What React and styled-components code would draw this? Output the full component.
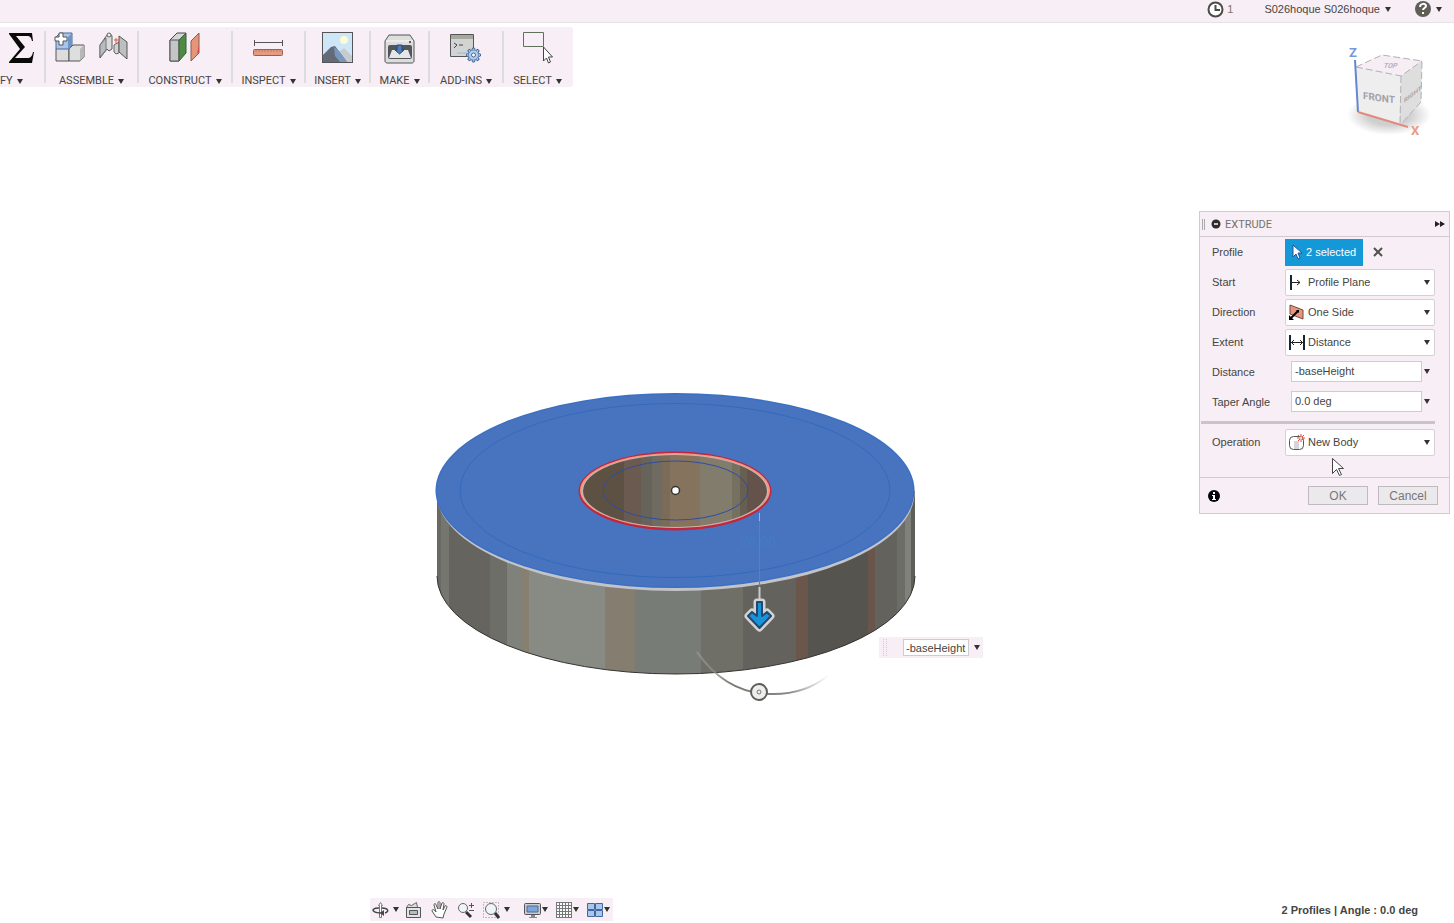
import React from "react";
import styled, { createGlobalStyle } from "styled-components";

const GlobalStyle = createGlobalStyle`
  * { box-sizing: border-box; }
  html, body { margin: 0; background: #fff; }
  body, button, input, select { font-family: "Liberation Sans", Arial, sans-serif; font-size: 11px; color: #45453f; }
  button { border: 0; background: none; padding: 0; cursor: pointer; }
  svg { display: block; flex: none; }
`;

const tint = "#f8eef6";
const line = "#cfcbcf";

const Page = styled.div`
  min-height: 100vh;
  display: flex;
  flex-direction: column;
  overflow: hidden;
`;

const Header = styled.header`
  height: 23px;
  display: flex;
  justify-content: flex-end;
  align-items: flex-start;
  padding: 0 12px 0 0;
  background: ${tint};
  border-bottom: 1px solid #e6e2e6;
`;

const HeaderButton = styled.button`
  height: 18px;
  display: flex;
  align-items: center;
  gap: ${(p) => p.$gap || 5}px;
  margin-left: ${(p) => p.$before || 0}px;
  color: ${(p) => p.$color || "#45453f"};
`;

const Workspace = styled.div`
  flex: 1;
  display: grid;
`;

const Canvas = styled.div`
  grid-area: 1 / 1;
  position: relative;
`;

const Model = styled.svg`
  position: absolute;
  left: 430px;
  top: 362px;
`;

const FloatingField = styled.div`
  position: absolute;
  left: 879px;
  top: 614px;
  height: 21px;
  display: flex;
  align-items: center;
  gap: 5px;
  padding: 0 3px 0 4px;
  background: ${tint};
`;

const Grip = styled.span`
  width: 4px;
  height: 17px;
  margin-right: 11px;
  border-left: 1px dotted ${line};
  border-right: 1px dotted ${line};
`;

const FloatingInput = styled.input`
  width: 66px;
  height: 17px;
  padding: 0 2px;
  border: 1px solid ${line};
  background: #fff;
`;

const Chrome = styled.div`
  grid-area: 1 / 1;
  position: relative;
  display: flex;
  flex-direction: column;
  pointer-events: none;
  & > * { pointer-events: auto; }
`;

const TopRow = styled.div`
  display: flex;
  justify-content: space-between;
  align-items: flex-start;
  padding: 4px 20px 0 0;
  height: 188px;
`;

const Toolbar = styled.nav`
  display: flex;
  height: 60px;
  padding: 4px 0;
  background: ${tint};
  border-radius: 0 3px 3px 0;
`;

const ToolGroup = styled.button`
  width: ${(p) => p.$width}px;
  height: 52px;
  display: flex;
  flex-direction: column;
  align-items: center;
  border-right: 2px solid ${(p) => (p.$last ? "transparent" : "#dcdcdc")};
`;

const ToolIcons = styled.span`
  height: 44px;
  flex: none;
  display: flex;
  gap: 12px;
`;

const ToolLabel = styled.span`
  display: flex;
  align-items: center;
  align-self: ${(p) => (p.$start ? "flex-start" : "center")};
  gap: 4px;
  height: 12px;
  font-family: Roboto, sans-serif;
  font-size: 11px;
  line-height: 12px;
  white-space: nowrap;
`;

const CubeHolder = styled.div`
  padding-top: 15px;
`;

const Panel = styled.form`
  position: relative;
  align-self: flex-end;
  width: 251px;
  margin-right: 4px;
  background: ${tint};
  border: 1px solid ${line};
`;

const PanelHeader = styled.div`
  height: 25px;
  display: flex;
  align-items: center;
  gap: 4px;
  padding: 0 4px 0 2px;
  border-bottom: 1px solid ${line};
`;

const PanelTitle = styled.h2`
  flex: 1;
  margin: 0;
  font-family: Roboto, sans-serif;
  font-size: 11px;
  font-weight: 400;
  color: #74746e;
`;

const PanelGrip = styled.span`
  width: 3px;
  height: 11px;
  margin-right: 2px;
  border-left: 1px solid #aaa;
  border-right: 1px solid #aaa;
`;

const Field = styled.div`
  height: 30px;
  display: flex;
  align-items: center;
  padding: 0 14px 0 12px;
`;

const FieldLabel = styled.label`
  flex: none;
  width: 73px;
`;

const SelectBox = styled.span`
  flex: 1;
  height: 27px;
  display: flex;
  align-items: center;
  gap: 3px;
  padding: 0 4px 0 2px;
  background: #fff;
  border: 1px solid #d5d0d5;
  border-radius: 2px;
`;

const Select = styled.select`
  flex: 1;
  height: 24px;
  min-width: 0;
  padding: 0;
  border: 0;
  appearance: none;
  background: transparent;
`;

const ValueBox = styled.span`
  flex: 1;
  min-width: 0;
  display: flex;
  align-items: center;
  gap: 2px;
  padding: 0 5px 2px 6px;
`;

const ValueInput = styled.input`
  flex: 1;
  min-width: 0;
  height: 21px;
  padding: 0 3px;
  border: 1px solid ${line};
  background: #fff;
`;

const SelectedButton = styled.button`
  width: 78px;
  height: 27px;
  display: flex;
  align-items: center;
  gap: 4px;
  padding-left: 7px;
  background: #1598d8;
  color: #fff;
`;

const ClearButton = styled.button`
  margin-left: 10px;
`;

const Divider = styled.hr`
  height: 3px;
  margin: 4px 14px 3px 1px;
  border: 0;
  background: #c8c4c9;
`;

const PanelFooter = styled.div`
  height: 36px;
  display: flex;
  align-items: center;
  gap: 10px;
  margin-top: 20px;
  padding: 0 11px 0 8px;
  border-top: 1px solid ${line};
`;

const InfoButton = styled.button`
  margin-right: auto;
`;

const ActionButton = styled.button`
  width: 60px;
  height: 19px;
  font-size: 12px;
  color: #77777a;
  background: #ebe9eb;
  border: 1px solid #bdbbbd;
`;

const Pointer = styled.svg`
  position: absolute;
  left: 131px;
  top: 245px;
`;

const BottomRow = styled.footer`
  margin-top: auto;
  display: flex;
  align-items: center;
  padding: 0 36px 2px 370px;
`;

const NavBar = styled.nav`
  height: 23px;
  display: flex;
  align-items: center;
  padding: 0 3px 0 2px;
  background: ${tint};
`;

const NavButton = styled.button`
  display: flex;
  align-items: center;
  gap: ${(p) => p.$gap || 1}px;
  margin-left: ${(p) => p.$before || 0}px;
`;

const Status = styled.p`
  margin: 0 0 0 auto;
  font-weight: 700;
`;

const Caret = () => (
  <svg width="6" height="5" viewBox="0 0 6 5" aria-hidden="true">
    <path d="M0 0h6L3 5z" fill="#33332f" />
  </svg>
);

const Icon = ({ w = 32, h = 34, children }) => (
  <svg width={w} height={h} viewBox={`0 0 ${w} ${h}`} fill="none" aria-hidden="true">
    {children}
  </svg>
);

const SigmaIcon = () => (
  <Icon w={26}>
    <path d="M0 2h23l1 8h-1c-1-4-2-5-5-5H7l9 11L6 27h12c4 0 5-2 6-6h1l-2 11H0v-1l11-13L0 3z" fill="#0a0a08" />
  </Icon>
);

const AssembleIcon = () => (
  <Icon>
    <path d="M2 18l2-2h11v14H2z" fill="#ddd" stroke="#555" />
    <path d="M15 18l4-4h11v12l-4 4H15z" fill="#dedede" stroke="#555" />
    <path d="M26 18l4-4v12l-4 4z" fill="#b7b7b7" />
    <path d="M2 6l4-4h12v12l-3 4H2z" fill="#a9c5e9" stroke="#4d6a94" />
    <path d="M14 6l4-4v12l-4 4z" fill="#6c94ca" />
    <path d="M5 2h4v4h4v4h-4v4H5v-4H1V6h4z" fill="#fff" stroke="#555" />
  </Icon>
);

const JointIcon = () => (
  <Icon>
    <path d="M11 8v12l3-3V8z" fill="#dc9a72" />
    <path d="M2 14l7-10c2-2 5-1 5 2v12l-3 2-2-2-7 9z" fill="#d9dbdc" stroke="#5a5a5a" />
    <path d="M2 14l6-7v12l-6 7z" fill="#b9bcbf" stroke="#777" />
    <circle cx="11" cy="4" r="2" fill="#eee" stroke="#666" />
    <path d="M16 14l5-3v11l-3 1-2-2z" fill="#d0d1d1" stroke="#666" />
    <path d="M21 5l8 6v17l-8-7z" fill="#bcbec0" stroke="#555" />
    <path d="M18 7v5M16 9h5" stroke="#e05b3a" />
  </Icon>
);

const ConstructIcon = () => (
  <Icon>
    <path d="M1 9l7-7h9l-7 7v21H1z" fill="#d4d6d6" stroke="#444" />
    <path d="M1 9h9v21H1z" fill="#c3c5c6" stroke="#555" />
    <path d="M10 9l7-7v20l-7 8z" fill="#4d8a42" stroke="#3f5a3a" />
    <path d="M22 10l8-8v20l-8 8z" fill="#e59679" stroke="#8b5d4b" />
    <path d="M30 14v7l-2 2z" fill="#d8434a" />
  </Icon>
);

const InspectIcon = () => (
  <Icon>
    <path d="M1 11.500h29M1.500 9v6M29.500 9v6" stroke="#555" />
    <rect x=".500" y="18.500" width="29" height="6" rx="1" fill="#e59b80" stroke="#946250" />
    <path d="M3 19v2M6 19v2M9 19v2M12 19v2M15 19v2M18 19v2M21 19v2M24 19v2M27 19v2" stroke="#bd7b62" />
  </Icon>
);

const InsertIcon = () => (
  <Icon>
    <rect x=".500" y="1.500" width="30" height="30" fill="#cfe6f7" stroke="#555" />
    <circle cx="22" cy="9" r="4" fill="#fdfbd5" />
    <path d="M13 24l9-7 8 8v6H13z" fill="#c5cbd1" />
    <path d="M1 24l8-8 4-1 12 16H1z" fill="#636b78" />
    <path d="M12 16l5 4 8 11h-7l-5-6z" fill="#7996bd" />
  </Icon>
);

const MakeIcon = () => (
  <Icon>
    <path d="M1 10l4-6h21l4 6v20c0 1-1 2-2 2H3c-1 0-2-1-2-2z" fill="#dcdddc" stroke="#555" />
    <path d="M2 10h27" stroke="#fafafa" />
    <rect x="4" y="14" width="24" height="14" rx="2" fill="#53555a" />
    <path d="M8 19h16l3 8H5z" fill="#e5e6e6" />
    <path d="M13 14h5v5h2l-4.500 4-4.500-4h2z" fill="#4e79bb" stroke="#27477a" />
    <circle cx="26" cy="11" r="1" fill="#333" />
  </Icon>
);

const teeth = [0, 45, 90, 135, 180, 225, 270, 315];

const AddInsIcon = () => (
  <Icon>
    <path d="M.500 3.500h23v22H.500z" fill="#d2d3d3" stroke="#555" />
    <path d="M1 4h22v4H1z" fill="#a6a89f" />
    <path d="M4 12l3 2-3 3M9 14h4" stroke="#444" />
    <path d="M7 22h10" stroke="#99b8d8" />
    {teeth.map((a) => (
      <path key={a} d="M22.500 17h2l1 4h-4z" fill="#bed4ed" stroke="#456894" transform={`rotate(${a} 23.500 24)`} />
    ))}
    <circle cx="23.500" cy="24" r="5" fill="#b4cdec" stroke="#6d8fbd" />
    <circle cx="23.500" cy="24" r="2" fill="#fff" stroke="#456894" />
  </Icon>
);

const SelectIcon = () => (
  <Icon>
    <path d="M1.500 1.500h20v14h-20z" stroke="#62705d" />
    <path d="M21.500 16v14l3-3 2 5 2-1-2-5h4z" fill="#fff" stroke="#444" />
  </Icon>
);

const tools = [
  { label: "FY", width: 46, icons: [SigmaIcon] },
  { label: "ASSEMBLE", width: 93, icons: [AssembleIcon, JointIcon] },
  { label: "CONSTRUCT", width: 94, icons: [ConstructIcon] },
  { label: "INSPECT", width: 73, icons: [InspectIcon] },
  { label: "INSERT", width: 65, icons: [InsertIcon] },
  { label: "MAKE", width: 59, icons: [MakeIcon] },
  { label: "ADD-INS", width: 74, icons: [AddInsIcon] },
  { label: "SELECT", width: 69, icons: [SelectIcon] },
];

const ViewCube = () => (
  <svg width="90" height="100" viewBox="1344 42 90 100" role="img" aria-label="View cube">
    <defs>
      <radialGradient id="shade">
        <stop offset="0.5" stopColor="#cfcfcf" />
        <stop offset="1" stopColor="#cfcfcf" stopOpacity="0" />
      </radialGradient>
    </defs>
    <ellipse cx="1389" cy="115" rx="42" ry="20" fill="url(#shade)" />
    <path d="M1356 67l26-12 40 6-21 15z" fill="#f6edf5" />
    <path d="M1356 67l45 9-1 49-42-13z" fill="#eeeeef" />
    <path d="M1401 76l21-15-1 41-21 23z" fill="#dededf" />
    <path d="M1356 67l45 9 21-15M1356 67l26-12 40 6-1 41-21 23M1401 76l-1 48" fill="none" stroke="#b3b0b3" strokeDasharray="7 3" />
    <path d="M1355 60l3 52" stroke="#6488cc" strokeWidth="2" />
    <path d="M1358 112l50 15" stroke="#e08a80" strokeWidth="2" />
    <g fontFamily="Roboto, sans-serif" fontWeight="700">
      <text x="1349" y="57" fontSize="13" fill="#7898d8">Z</text>
      <text x="1411" y="135" fontSize="13" fill="#ea9a85">X</text>
      <text transform="translate(1363 99) skewY(8)" fontSize="10" fill="#a2a2a6">FRONT</text>
      <text transform="translate(1404 103) skewY(-38)" fontSize="6" fill="#a4a4a8">RIGHT</text>
      <text transform="translate(1383 68) skewX(-20)" fontSize="7" fill="#b9b0ba">TOP</text>
    </g>
  </svg>
);

const sideBands = [
  [436, 441, "#6a6963"], [441, 449, "#74766f"], [449, 490, "#65645e"], [490, 507, "#6e6e69"],
  [507, 521, "#7f817b"], [521, 529, "#877f70"], [529, 605, "#888a84"], [605, 635, "#857e70"],
  [635, 701, "#787c76"], [701, 743, "#6f6f68"], [743, 796, "#63625c"], [796, 808, "#6b564c"],
  [808, 868, "#56544e"], [868, 875, "#69554a"], [875, 897, "#63625c"], [897, 905, "#6d6d67"],
  [905, 911, "#7f817a"], [911, 916, "#5f5f59"],
];

const holeBands = [
  [582, 624, "#5d5143"], [624, 641, "#6b5a50"], [641, 652, "#66635b"], [652, 662, "#6f6b61"],
  [662, 670, "#7a6c58"], [670, 700, "#86735d"], [700, 732, "#827c6c"], [732, 740, "#75705f"],
  [740, 747, "#675f52"], [747, 770, "#64534a"],
];

const Bands = ({ bands, y, height }) =>
  bands.map(([from, to, fill]) => (
    <rect key={from} x={from} y={y} width={to - from} height={height} fill={fill} shapeRendering="crispEdges" />
  ));

const arrow = "M757 602h5v14l5-4 4 4-11.500 12L748 616l4-4 5 4z";

const ExtrudedRing = () => (
  <Model width="490" height="325" viewBox="430 385 490 325" fill="none" role="img" aria-label="Ring model">
    <defs>
      <clipPath id="side"><path d="M437 491v85a239 98 0 0 0 478 0v-85z" /></clipPath>
      <clipPath id="hole"><ellipse cx="675" cy="491" rx="92" ry="36" /></clipPath>
      <linearGradient id="arc">
        <stop offset="0" stopColor="#b0b0aa" stopOpacity="0.400" />
        <stop offset="0.250" stopColor="#777770" />
        <stop offset="0.700" stopColor="#888" />
        <stop offset="1" stopColor="#999" stopOpacity="0" />
      </linearGradient>
    </defs>
    <g clipPath="url(#side)"><Bands bands={sideBands} y={490} height={190} /></g>
    <path d="M437 576a239 98 0 0 0 478 0" stroke="#33332f" />
    <ellipse cx="675.500" cy="492.500" rx="239" ry="98.500" fill="#c3c4c9" />
    <ellipse cx="675" cy="490.500" rx="239.500" ry="97.500" fill="#3a70c4" />
    <ellipse cx="675" cy="490.500" rx="238" ry="96" fill="#4874bf" />
    <ellipse cx="675" cy="490.500" rx="215" ry="87" stroke="#3469bb" />
    <text x="741" y="546" fontSize="14" fontFamily="Liberation Sans, sans-serif" fill="#427ac6">20.00</text>
    <ellipse cx="675" cy="491" rx="96.500" ry="39.500" fill="#bf263f" />
    <ellipse cx="675" cy="490.500" rx="95" ry="37.500" fill="#ee9a88" />
    <ellipse cx="675" cy="491" rx="93" ry="36.500" fill="#c5bcb4" />
    <g clipPath="url(#hole)"><Bands bands={holeBands} y={450} height={80} /></g>
    <ellipse cx="675.500" cy="490.500" rx="72.500" ry="29.500" stroke="#2d4da3" />
    <circle cx="675.500" cy="490.500" r="4" fill="#fff" stroke="#333" strokeWidth="1.500" />
    <path d="M759.500 520v67" stroke="#4c83c9" />
    <path d="M759.500 513v8" stroke="#a3b6cf" />
    <path d="M759.500 587v12" stroke="#c9cbd0" strokeWidth="2" />
    <path d={arrow} stroke="#d2d3d4" strokeWidth="7" strokeLinejoin="round" />
    <path d={arrow} fill="#1793dc" stroke="#24476a" strokeWidth="2" strokeLinejoin="round" />
    <path d="M697 652c14 20 36 41 72 42 24 1 44-6 60-19" stroke="url(#arc)" strokeWidth="2" />
    <circle cx="759" cy="692" r="8" fill="#eeeeec" stroke="#5d5d59" strokeWidth="2" />
    <circle cx="759" cy="692" r="2" stroke="#777" />
  </Model>
);

const PlaneIcon = () => (
  <Icon w={17} h={17}>
    <path d="M3 1v15" stroke="#182436" strokeWidth="2" />
    <path d="M4 8.500h8M9 6l3 2.500L9 11" stroke="#222" />
  </Icon>
);
const OneSideIcon = () => (
  <Icon w={17} h={17}>
    <path d="M2 1l13 5v9L2 10z" fill="#e69680" stroke="#75483c" />
    <path d="M3 14l7-7" stroke="#000" strokeWidth="2" />
    <path d="M1 16v-5l5 5zM11 6v3L8 6z" fill="#000" />
  </Icon>
);
const DistanceIcon = () => (
  <Icon w={17} h={17}>
    <path d="M2 1v15M16 1v15" stroke="#182436" strokeWidth="2" />
    <path d="M3 8.500h12M6 6L3.500 8.500 6 11M12 6l2.500 2.500L12 11" stroke="#222" />
  </Icon>
);
const NewBodyIcon = () => (
  <Icon w={17} h={17}>
    <rect x="1.500" y="2.500" width="14" height="13" rx="4" fill="#fff" stroke="#555" />
    <path d="M6 7h5v8H6z" fill="#d6d6d9" />
    <path d="M13 0v8M9 4h8M10 1l6 6M16 1l-6 6" stroke="#e04b3c" />
    <circle cx="13" cy="4" r="1" fill="#fff" />
  </Icon>
);

const SelectField = ({ id, label, icon: Glyph, options }) => (
  <Field>
    <FieldLabel htmlFor={id}>{label}</FieldLabel>
    <SelectBox>
      <Glyph />
      <Select id={id}>{options.map((o) => <option key={o}>{o}</option>)}</Select>
      <Caret />
    </SelectBox>
  </Field>
);

const ValueField = ({ id, label, value }) => (
  <Field>
    <FieldLabel htmlFor={id}>{label}</FieldLabel>
    <ValueBox>
      <ValueInput id={id} defaultValue={value} />
      <button type="button" aria-label={`${label} options`}><Caret /></button>
    </ValueBox>
  </Field>
);

const ExtrudePanel = () => (
  <Panel onSubmit={(e) => e.preventDefault()}>
    <PanelHeader>
      <PanelGrip />
      <button type="button" aria-label="Collapse">
        <Icon w={10} h={10}><circle cx="5" cy="5" r="4.500" fill="#2d2d2a" /><path d="M3 5h4" stroke="#fff" strokeWidth="1.500" /></Icon>
      </button>
      <PanelTitle>EXTRUDE</PanelTitle>
      <button type="button" aria-label="Dock">
        <Icon w={10} h={8}><path d="M0 1l5 3-5 3zM5 1l5 3-5 3z" fill="#222" /></Icon>
      </button>
    </PanelHeader>
    <Field>
      <FieldLabel htmlFor="profile">Profile</FieldLabel>
      <SelectedButton id="profile" type="button">
        <Icon w={10} h={16}><path d="M1 1v12l3-3 2 5 2-1-2-5h4z" fill="#fff" stroke="#244f9b" /></Icon>
        2 selected
      </SelectedButton>
      <ClearButton type="button" aria-label="Clear selection">
        <Icon w={10} h={10}><path d="M1 1l8 8M9 1L1 9" stroke="#50504c" strokeWidth="2" /></Icon>
      </ClearButton>
    </Field>
    <SelectField id="start" label="Start" icon={PlaneIcon} options={["Profile Plane"]} />
    <SelectField id="direction" label="Direction" icon={OneSideIcon} options={["One Side"]} />
    <SelectField id="extent" label="Extent" icon={DistanceIcon} options={["Distance"]} />
    <ValueField id="distance" label="Distance" value="-baseHeight" />
    <ValueField id="taper" label="Taper Angle" value="0.0 deg" />
    <Divider />
    <SelectField id="operation" label="Operation" icon={NewBodyIcon} options={["New Body"]} />
    <PanelFooter>
      <InfoButton type="button" aria-label="Information">
        <Icon w={12} h={12}><circle cx="6" cy="6" r="6" fill="#050505" /><path d="M5 2h2v2H5zM4 5h3v4h1v1H4V9h1V6H4z" fill="#fff" /></Icon>
      </InfoButton>
      <ActionButton type="submit">OK</ActionButton>
      <ActionButton type="button">Cancel</ActionButton>
    </PanelFooter>
    <Pointer width="14" height="20" viewBox="0 0 14 20" aria-hidden="true">
      <path d="M1.500 1.500v15l4-4 3 6 2-1-3-6h5z" fill="#fff" stroke="#444" />
    </Pointer>
  </Panel>
);

const OrbitIcon = () => (
  <Icon w={17} h={18}>
    <path d="M8.500 1.500l2 3h-1v12h-2v-12h-1z" fill="#fff" stroke="#777" />
    <path d="M7 7C1 7 0 9 2 10.500S8 12 10 12M10 7c7 0 7 4 3 5" stroke="#444" strokeWidth="1.500" />
    <path d="M12 9l-4 3 4 3z" fill="#444" />
  </Icon>
);
const LookAtIcon = () => (
  <Icon w={17} h={18}>
    <path d="M1.500 6.500l2-3 3 1 5-3 1 5z" fill="#ddd" stroke="#666" />
    <path d="M1.500 6.500h14v10h-14z" fill="#e4e4e4" stroke="#555" />
    <path d="M4.500 9.500h8v4h-8z" fill="#bbb" stroke="#555" />
  </Icon>
);
const HandIcon = () => (
  <Icon w={17} h={18}>
    <path d="M5 16l-4-6c0-2 2-2 4 1L3 4c0-2 2-2 2 0l2 4V2c0-2 2-2 2 0v6l2-6c1-1 2 0 2 1l-1 6 2-4c1-1 2 0 2 1l-3 7-1 4z" fill="#fff" stroke="#555" />
  </Icon>
);
const ZoomIcon = () => (
  <Icon w={17} h={18}>
    <circle cx="6" cy="7" r="4.500" fill="#eef4f7" stroke="#666" />
    <path d="M9 11l5 5" stroke="#333" strokeWidth="3" />
    <path d="M12 4.500h5M14.500 2v5M12 9.500h5" stroke="#555" />
  </Icon>
);
const FitIcon = () => (
  <Icon w={17} h={18}>
    <path d="M.500 1.500h15v15H.500z" stroke="#888" strokeDasharray="1 2" />
    <circle cx="8" cy="8" r="5.500" fill="#eef4f7" stroke="#666" />
    <path d="M12 12l4 5" stroke="#333" strokeWidth="3" />
  </Icon>
);
const DisplayIcon = () => (
  <Icon w={17} h={18}>
    <rect x=".500" y="2.500" width="16" height="11" rx="1" fill="#ccc" stroke="#555" />
    <path d="M3 5h11v6H3z" fill="#7fa6d9" stroke="#496a99" />
    <path d="M7 14h4v2h2v1H5v-1h2z" fill="#888" />
  </Icon>
);
const GridIcon = () => (
  <Icon w={17} h={18}>
    <path d="M1 1.500h15v15H1z" fill="#fafafa" />
    <path d="M1.500 1v16M4.500 1v16M7.500 1v16M10.500 1v16M13.500 1v16M16.500 1v16M1 1.500h16M1 4.500h16M1 7.500h16M1 10.500h16M1 13.500h16M1 16.500h16" stroke="#777" />
  </Icon>
);
const ViewportsIcon = () => (
  <Icon w={17} h={18}>
    <path d="M1.500 2.500h7v6h-7zM9.500 2.500h7v6h-7zM1.500 9.500h7v6h-7zM9.500 9.500h7v6h-7z" fill="#a9c6ec" stroke="#42679e" />
  </Icon>
);

const navItems = [
  { name: "Orbit", icon: OrbitIcon, menu: true, gap: 4 },
  { name: "Look at", icon: LookAtIcon, before: 6 },
  { name: "Pan", icon: HandIcon, before: 9 },
  { name: "Zoom", icon: ZoomIcon, before: 9 },
  { name: "Fit", icon: FitIcon, menu: true, gap: 4, before: 9 },
  { name: "Display settings", icon: DisplayIcon, menu: true, before: 14 },
  { name: "Grid and snaps", icon: GridIcon, menu: true, before: 7 },
  { name: "Viewports", icon: ViewportsIcon, menu: true, before: 7 },
];

export default function App() {
  return (
    <Page>
      <GlobalStyle />
      <Header>
        <HeaderButton aria-label="Job status, 1" $color="#77776f" $gap={3}>
          <Icon w={17} h={17}><circle cx="8.500" cy="8.500" r="7" fill="#fff" stroke="#4b4b46" strokeWidth="2" /><path d="M8.500 4v5H13" stroke="#4b4b46" strokeWidth="2" /></Icon>
          1
        </HeaderButton>
        <HeaderButton $before={31}>S026hoque S026hoque <Caret /></HeaderButton>
        <HeaderButton $before={24} aria-label="Help">
          <svg width="16" height="16" viewBox="0 0 16 16" fill="none" aria-hidden="true">
            <circle cx="8" cy="8" r="8" fill="#5f5f57" />
            <path d="M5 6c0-4 6-4 6-1 0 2-3 2-3 4M8 11v2" stroke="#fff" strokeWidth="2" />
          </svg>
          <Caret />
        </HeaderButton>
      </Header>
      <Workspace>
        <Canvas>
          <ExtrudedRing />
          <FloatingField>
            <Grip />
            <FloatingInput aria-label="Distance on canvas" defaultValue="-baseHeight" />
            <button type="button" aria-label="Distance menu"><Caret /></button>
          </FloatingField>
        </Canvas>
        <Chrome>
          <TopRow>
            <Toolbar>
              {tools.map(({ label, width, icons }, i) => (
                <ToolGroup key={label} $width={width} $last={i === tools.length - 1}>
                  <ToolIcons>{icons.map((Glyph, n) => <Glyph key={n} />)}</ToolIcons>
                  <ToolLabel $start={i === 0}>{label} <Caret /></ToolLabel>
                </ToolGroup>
              ))}
            </Toolbar>
            <CubeHolder><ViewCube /></CubeHolder>
          </TopRow>
          <ExtrudePanel />
          <BottomRow>
            <NavBar>
              {navItems.map(({ name, icon: Glyph, menu, gap, before }) => (
                <NavButton key={name} aria-label={name} $gap={gap} $before={before}><Glyph />{menu && <Caret />}</NavButton>
              ))}
            </NavBar>
            <Status>2 Profiles | Angle : 0.0 deg</Status>
          </BottomRow>
        </Chrome>
      </Workspace>
    </Page>
  );
}
